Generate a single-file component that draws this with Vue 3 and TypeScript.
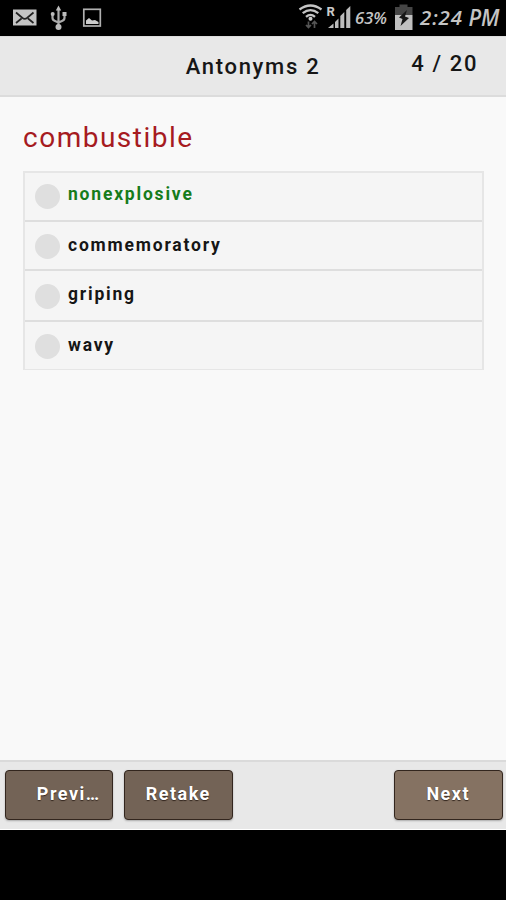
<script setup lang="ts">
import { ref } from 'vue'

interface Choice {
  text: string
  correct: boolean
}

const title = 'Antonyms 2'
const current = ref(4)
const total = 20
const word = 'combustible'
const choices: Choice[] = [
  { text: 'nonexplosive', correct: true },
  { text: 'commemoratory', correct: false },
  { text: 'griping', correct: false },
  { text: 'wavy', correct: false },
]
</script>

<template>
  <div class="screen">
    <div class="status">
      <svg class="status-icons" viewBox="0 0 506 36" width="506" height="36">
        <rect x="13" y="9.500" width="23.500" height="16" fill="#c4c4c4" />
        <path d="M16 12.500 L22.500 18 Q24.800 19.600 27 18 L33.500 12.500 M16 23 L21.500 18.500 M33.500 23 L28 18.500" fill="none" stroke="#222" stroke-width="1.700" />
        <path d="M58.500 9 V27 M52.500 14 V18 Q52.500 20 55 21 L58.500 22.500 M64.500 14 V18 Q64.500 20 62 21 L58.500 22.500" fill="none" stroke="#aaa" stroke-width="2.200" />
        <g fill="#bcbcbc">
          <path d="M55.800 10.500 L58.500 5.500 L61.200 10.500 Z" />
          <circle cx="52.700" cy="14" r="2" />
          <rect x="62.500" y="12" width="4" height="4" />
          <circle cx="58.500" cy="27" r="3" />
        </g>
        <rect x="83.800" y="9.300" width="16.500" height="16.700" fill="none" stroke="#b0b0b0" stroke-width="1.700" />
        <path d="M86 24 V20.500 L89 18 L92 20.500 L95 20 L98.500 22 V24 Z" fill="#ccc" />
        <g fill="none" stroke="#c4c4c4" stroke-width="2.300">
          <path d="M299.500 9.500 Q310.500 1.500 321.500 9.500" />
          <path d="M302.700 13.200 Q310.500 7 318.300 13.200" />
          <path d="M306 16.800 Q310.500 13 315 16.800" />
        </g>
        <circle cx="310.500" cy="18.800" r="2" fill="#ccc" />
        <path d="M308.500 21.500 V27 M306 25 L308.500 27.500 L311 25 M314.500 28 V22 M312 24 L314.500 21.500 L317 24" fill="none" stroke="#555" stroke-width="1.700" />
        <text x="326.500" y="16" class="roam">R</text>
        <g fill="#bcbcbc">
          <path d="M328 28 L333.500 23.500 V28 Z" />
          <path d="M335 22 L338.500 18.500 V28 H335 Z" />
          <path d="M340.300 16 L344.300 12 V28 H340.300 Z" />
          <path d="M346.200 10 L350.300 6 V28 H346.200 Z" />
        </g>
        <text x="355" y="24" class="hand" font-size="16.500" textLength="32" lengthAdjust="spacingAndGlyphs">63%</text>
        <path d="M399.500 4.500 H407.500 V7 H412.500 V15 H395 V7 H399.500 Z" fill="#454545" />
        <rect x="395" y="15" width="17.500" height="15" fill="#c0c0c0" />
        <path d="M407 10 L399 17.500 L402.500 19 L400.500 26 L409 18 L405 16.500 Z" fill="#171717" />
        <text x="420" y="24.500" class="hand" font-size="20.500" textLength="42" lengthAdjust="spacing">2:24</text>
        <text x="468.500" y="26" class="hand" font-size="23" textLength="31" lengthAdjust="spacingAndGlyphs">PM</text>
      </svg>
    </div>

    <header class="header">
      <h1 class="title">{{ title }}</h1>
      <span class="count">{{ current }} / {{ total }}</span>
    </header>

    <main class="content">
      <h2 class="word">{{ word }}</h2>
      <ul class="choices">
        <li v-for="choice in choices" :key="choice.text" class="choice">
          <span class="radio"></span>
          <span class="label" :class="{ correct: choice.correct }">{{ choice.text }}</span>
        </li>
      </ul>
    </main>

    <footer class="footer">
      <button class="btn previous">Previ…</button>
      <button class="btn retake">Retake</button>
      <button class="btn next">Next</button>
    </footer>
  </div>
</template>

<style>
body {
  margin: 0;
  background: #000;
}
</style>

<style scoped>
.screen {
  display: flex;
  flex-direction: column;
  box-sizing: border-box;
  width: 506px;
  height: 900px;
  padding-bottom: 70px;
  overflow: hidden;
  background: #000;
  font-family: Roboto, "Liberation Sans", sans-serif;
  color: #161616;
}
.status {
  height: 36px;
  flex: none;
}
.status-icons {
  display: block;
}
.roam {
  font: 700 13px Roboto, sans-serif;
  fill: #ccc;
}
.hand {
  font-family: "Open Sans", sans-serif;
  font-style: italic;
  font-weight: 600;
  fill: #c4c4c4;
}
.header {
  display: grid;
  grid-template-columns: 1fr auto 1fr;
  box-sizing: border-box;
  flex: none;
  height: 61px;
  background: #e8e8e8;
  border-top: 1px solid #dcdcdc;
  border-bottom: 2px solid #dcdcdc;
}
.title {
  grid-column: 2;
  margin: 17px 0 0;
  font-size: 22px;
  line-height: 26px;
  font-weight: 500;
  letter-spacing: 1.7px;
}
.count {
  justify-self: end;
  margin: 14px 28px 0 0;
  font-size: 22px;
  line-height: 26px;
  font-weight: 500;
  letter-spacing: 1.6px;
}
.content {
  flex: 1;
  padding: 0 22px 0 23px;
  background: #f9f9f9;
}
.word {
  margin: 0;
  padding: 24px 0 16px;
  font-size: 28px;
  line-height: 34px;
  font-weight: 400;
  letter-spacing: 1.5px;
  color: #a61b1f;
}
.choices {
  list-style: none;
  margin: 0;
  padding: 0;
  background: #f5f5f5;
  border: 2px solid #e6e6e6;
  border-bottom-width: 1px;
}
.choice {
  display: flex;
  box-sizing: border-box;
  height: 49px;
  padding: 11px 0 0 9.5px;
  gap: 8.5px;
  border-bottom: 2px solid #dedede;
}
.choice:first-child {
  padding-top: 10px;
}
.choice:nth-child(3) {
  height: 51px;
  padding-top: 12px;
}
.choice:last-child {
  height: 47px;
  border-bottom: 0;
}
.radio {
  width: 25px;
  height: 25px;
  margin-top: 0.5px;
  border-radius: 50%;
  background: #dfdfdf;
}
.label {
  font-size: 17.5px;
  line-height: 22px;
  font-weight: 700;
  letter-spacing: 1.8px;
}
.choice:nth-child(even) .label {
  margin-top: 1px;
}
.correct {
  color: #167c1b;
}
.footer {
  display: flex;
  align-items: flex-start;
  box-sizing: border-box;
  flex: none;
  height: 70px;
  padding: 8px 3.5px 0 4.5px;
  background: #e8e8e8;
  border-top: 2px solid #dadada;
  border-bottom: 1px solid #fff;
}
.btn {
  box-sizing: border-box;
  width: 108.5px;
  height: 50px;
  margin: 0;
  padding: 0 0 4px;
  border: 1px solid #33261e;
  border-radius: 4px;
  background: #736356;
  color: #fff;
  font-family: inherit;
  font-size: 18px;
  font-weight: 700;
  letter-spacing: 1.5px;
  text-shadow: 0 1px 1px #33261e;
  box-shadow: 0 1px 2px #aaa;
}
.previous {
  padding-left: 20px;
}
.retake {
  margin-left: 11px;
}
.next {
  margin-left: auto;
  background: #857262;
}
</style>
